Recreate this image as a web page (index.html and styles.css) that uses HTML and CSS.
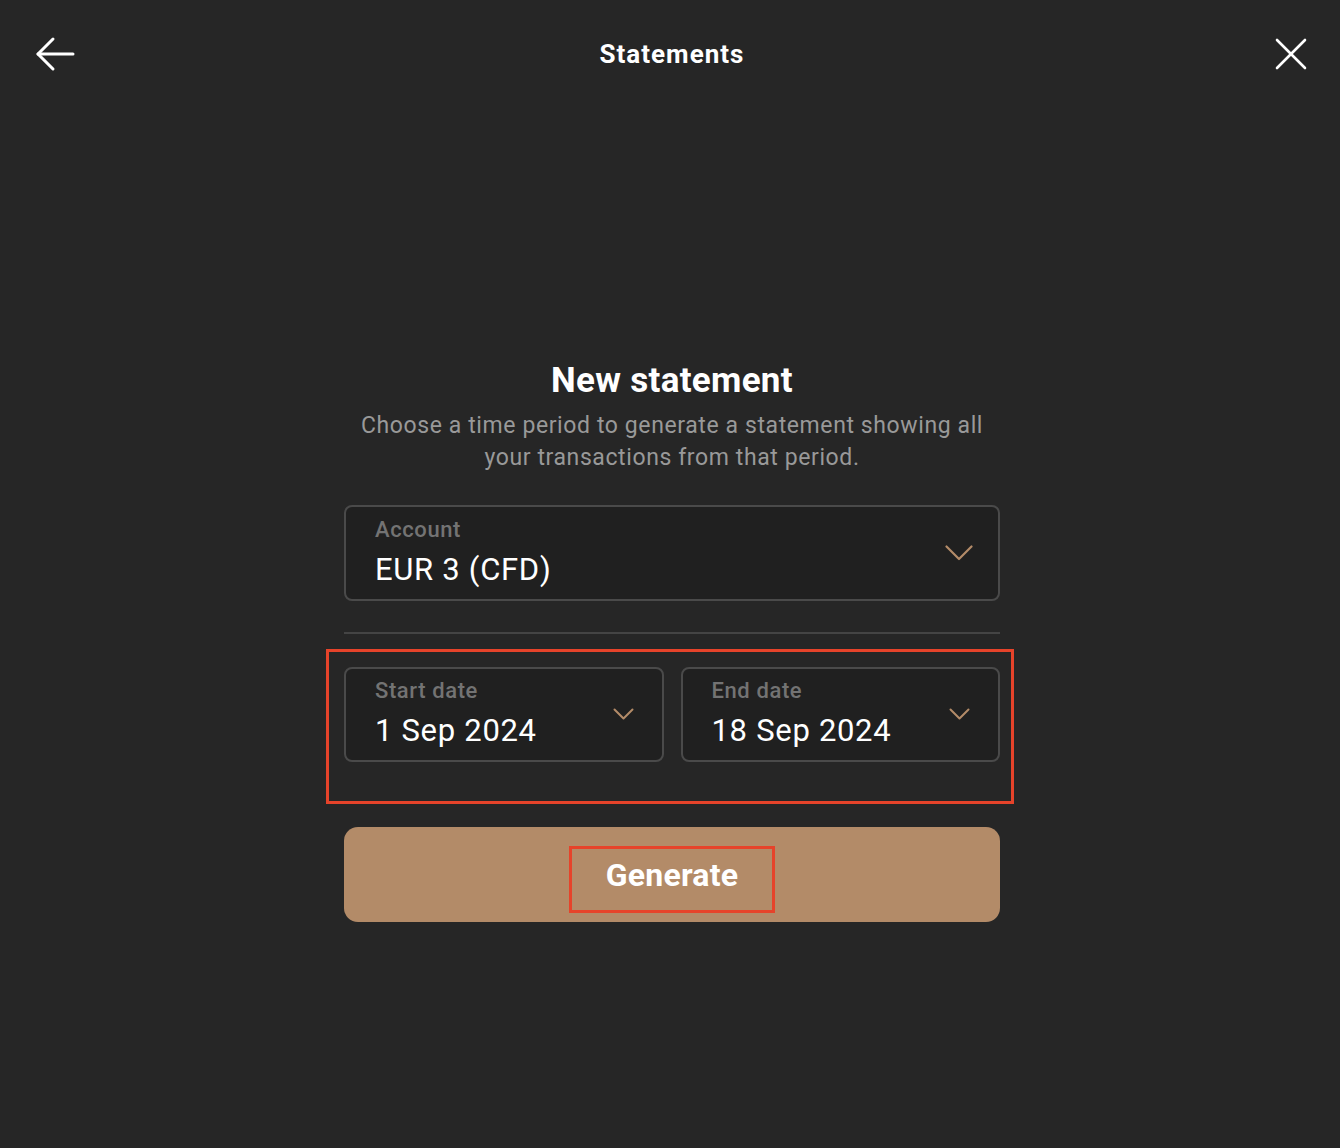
FILE: index.html
```html
<!DOCTYPE html>
<html lang="en">
<head>
<meta charset="utf-8">
<title>Statements</title>
<link rel="stylesheet" href="styles.css">
</head>
<body>
<div class="app">
  <header class="topbar">
    <button class="icon-btn back" aria-label="Back">
      <svg width="40" height="36" viewBox="0 0 40 36" fill="none" stroke="#ffffff" stroke-width="3" stroke-linecap="round" stroke-linejoin="round">
        <path d="M38 18H3"/>
        <path d="M18 3L3 18L18 33"/>
      </svg>
    </button>
    <h1 class="title">Statements</h1>
    <button class="icon-btn close" aria-label="Close">
      <svg width="32" height="32" viewBox="0 0 32 32" fill="none" stroke="#ffffff" stroke-width="2.6" stroke-linecap="round">
        <path d="M2 2L30 30"/>
        <path d="M30 2L2 30"/>
      </svg>
    </button>
  </header>

  <main class="content">
    <section class="form">
      <h2 class="heading">New statement</h2>
      <p class="lead">Choose a time period to generate a statement showing all your transactions from that period.</p>

      <div class="field">
        <div class="field-text">
          <span class="field-label">Account</span>
          <span class="field-value">EUR 3 (CFD)</span>
        </div>
        <svg class="chevron chevron-lg" width="28" height="16" viewBox="0 0 28 16" fill="none" stroke="#b38b68" stroke-width="2.2" stroke-linecap="round" stroke-linejoin="round">
          <path d="M1.5 1.5L14 14L26.5 1.5"/>
        </svg>
      </div>

      <hr class="divider">

      <div class="date-group">
        <div class="field field-date">
          <div class="field-text">
            <span class="field-label">Start date</span>
            <span class="field-value">1 Sep 2024</span>
          </div>
          <svg class="chevron chevron-sm" width="21" height="13" viewBox="0 0 21 13" fill="none" stroke="#b38b68" stroke-width="2" stroke-linecap="round" stroke-linejoin="round">
            <path d="M1.5 1.5L10.5 10.5L19.5 1.5"/>
          </svg>
        </div>
        <div class="field field-date">
          <div class="field-text">
            <span class="field-label">End date</span>
            <span class="field-value">18 Sep 2024</span>
          </div>
          <svg class="chevron chevron-sm" width="21" height="13" viewBox="0 0 21 13" fill="none" stroke="#b38b68" stroke-width="2" stroke-linecap="round" stroke-linejoin="round">
            <path d="M1.5 1.5L10.5 10.5L19.5 1.5"/>
          </svg>
        </div>
      </div>

      <button class="generate"><span class="generate-label">Generate</span></button>
    </section>
  </main>
</div>
</body>
</html>
```

FILE: styles.css
```css
* {
  box-sizing: border-box;
}

html, body {
  margin: 0;
  padding: 0;
  background: #262626;
}

body {
  font-family: Roboto, "Noto Sans", "Liberation Sans", sans-serif;
  color: #ffffff;
}

.app {
  width: 1340px;
  min-height: 1148px;
  background: #262626;
}

.topbar {
  height: 108px;
  display: flex;
  align-items: center;
  justify-content: space-between;
  padding: 0 33px 0 35px;
  position: relative;
}

.icon-btn {
  background: none;
  border: 0;
  padding: 0;
  margin: 0;
  display: flex;
  align-items: center;
  justify-content: center;
  cursor: pointer;
}

.title {
  margin: 0;
  font-size: 26px;
  font-weight: 700;
  line-height: 30px;
  letter-spacing: 1px;
  position: absolute;
  left: 0;
  right: 0;
  top: 39px;
  text-align: center;
  padding-left: 4px;
  pointer-events: none;
}

.content {
  display: flex;
  justify-content: center;
  padding-left: 4px;
  padding-top: 252px;
}

.form {
  width: 656px;
  display: flex;
  flex-direction: column;
}

.heading {
  margin: 0;
  font-size: 35px;
  line-height: 42px;
  font-weight: 700;
  text-align: center;
  letter-spacing: 0.3px;
}

.lead {
  margin: 8px 0 0;
  font-size: 23px;
  line-height: 32px;
  letter-spacing: 0.6px;
  color: #999999;
  text-align: center;
  padding: 0 6px;
}

.field {
  margin-top: 31px;
  height: 96px;
  border: 2px solid #4a4a4a;
  border-radius: 8px;
  background: #202020;
  display: flex;
  align-items: center;
  padding: 0 25px 0 29px;
}

.field-text {
  flex: 1;
  display: flex;
  flex-direction: column;
  padding-bottom: 2px;
}

.field-label {
  font-size: 22px;
  line-height: 26px;
  font-weight: 500;
  letter-spacing: 0.6px;
  color: #737373;
}

.field-value {
  margin-top: 9px;
  font-size: 31px;
  line-height: 36px;
  letter-spacing: 0.7px;
  color: #ffffff;
}

.chevron {
  flex: none;
  display: block;
}

.divider {
  margin: 31px 0 0;
  border: 0;
  height: 2px;
  background: #444444;
}

.date-group {
  margin-top: 33px;
  display: grid;
  grid-template-columns: 1fr 1fr;
  gap: 17px;
  position: relative;
}

.date-group::before {
  content: "";
  position: absolute;
  top: -18px;
  left: -18px;
  right: -14px;
  bottom: -42px;
  border: 3px solid #e6432a;
  pointer-events: none;
}

.field-date {
  margin-top: 0;
  height: 95px;
  padding-right: 28px;
}

.generate {
  margin-top: 65px;
  height: 95px;
  border: 0;
  border-radius: 14px;
  background: #b38b68;
  display: flex;
  justify-content: center;
  align-items: flex-start;
  padding: 19px 0 0;
  font-family: inherit;
  cursor: pointer;
}

.generate-label {
  display: block;
  border: 3px solid #e6432a;
  padding: 0 34px 9px;
  font-size: 32px;
  line-height: 52px;
  font-weight: 700;
  letter-spacing: 0.2px;
  color: #ffffff;
}
```
